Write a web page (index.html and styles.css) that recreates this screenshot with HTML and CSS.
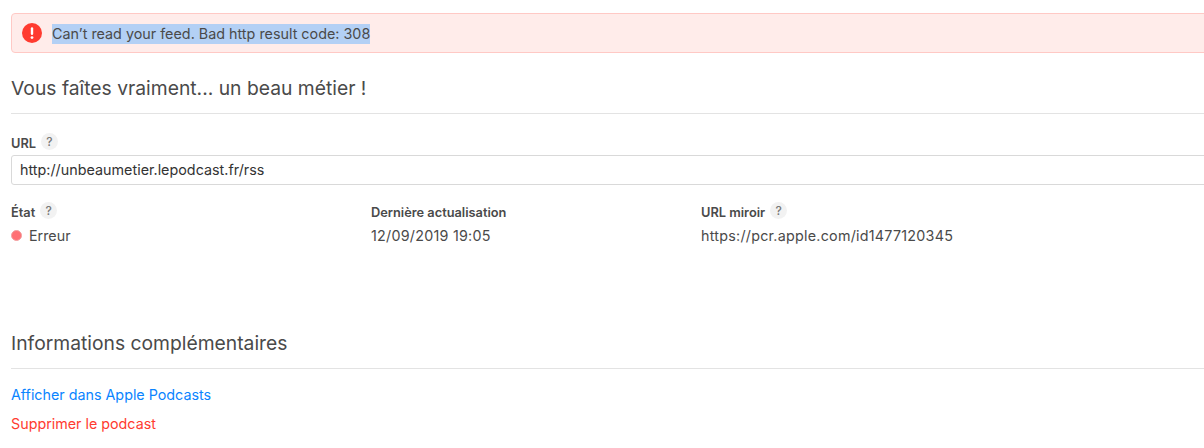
FILE: index.html
```html
<!DOCTYPE html>
<html lang="fr">
<head>
  <meta charset="UTF-8">
  <title>Podcast</title>
  <link rel="stylesheet" href="styles.css">
</head>
<body>
  <div class="page">
    <div class="alert">
      <svg class="alert-icon" width="20" height="20" viewBox="0 0 20 20">
        <circle cx="10" cy="10" r="10" fill="#ff3b30"/>
        <rect x="8.8" y="4.2" width="2.4" height="7.8" rx="1.2" fill="#fff"/>
        <circle cx="10" cy="14.6" r="1.4" fill="#fff"/>
      </svg>
      <span class="alert-text">Can’t read your feed. Bad http result code: 308</span>
    </div>

    <h2 class="title">Vous faîtes vraiment... un beau métier !</h2>

    <div class="field">
      <div class="label">URL <span class="help">?</span></div>
      <input class="input" type="text" value="http://unbeaumetier.lepodcast.fr/rss">
    </div>

    <div class="columns">
      <div class="col">
        <div class="label">État <span class="help">?</span></div>
        <div class="value"><span class="dot"></span>Erreur</div>
      </div>
      <div class="col">
        <div class="label">Dernière actualisation</div>
        <div class="value value-num">12/09/2019 19:05</div>
      </div>
      <div class="col">
        <div class="label">URL miroir <span class="help">?</span></div>
        <div class="value value-num">https://pcr.apple.com/id1477120345</div>
      </div>
    </div>

    <h2 class="title title-info">Informations complémentaires</h2>

    <div class="links">
      <a class="link" href="#">Afficher dans Apple Podcasts</a>
      <a class="link link-danger" href="#">Supprimer le podcast</a>
    </div>
  </div>
</body>
</html>
```

FILE: styles.css
```css
* { box-sizing: border-box; }
html, body {
  overflow: hidden;
}
body {
  margin: 0;
  background: #fff;
  font-family: Inter, 'Noto Sans', sans-serif;
  font-size: 14px;
  color: #4a4a4a;
}
.page {
  width: 1240px;
  padding: 13px 0 0 11px;
}
.alert {
  display: flex;
  align-items: center;
  height: 40px;
  padding-left: 10px;
  background: #ffecea;
  border: 1px solid #ffc9c5;
  border-radius: 4px;
}
.alert-icon {
  margin-right: 10px;
  flex-shrink: 0;
}
.alert-text {
  margin-top: 2px;
  background: #b3d0f5;
  font-size: 14.35px;
  line-height: 20px;
}
.title {
  margin: 0;
  height: 61px;
  padding-top: 22px;
  border-bottom: 1px solid #e3e3e3;
  font-size: 19.3px;
  line-height: 26px;
  font-weight: 400;
  color: #4a4a4a;
}
.field {
  margin-top: 20px;
}
.label {
  display: flex;
  align-items: center;
  gap: 5px;
  height: 18px;
  font-size: 12.8px;
  font-weight: 600;
  color: #4a4a4a;
}
.help {
  display: inline-flex;
  align-items: center;
  justify-content: center;
  width: 17px;
  height: 17px;
  margin-top: -3px;
  border-radius: 50%;
  background: #f2f2f2;
  font-size: 12px;
  font-weight: 500;
  color: #777;
}
.input {
  display: block;
  width: 100%;
  height: 30px;
  margin-top: 3px;
  padding: 0 8px 1px;
  border: 1px solid #d9d9d9;
  border-radius: 3px;
  font-family: inherit;
  font-size: 14.35px;
  color: #333;
}
.columns {
  display: grid;
  grid-template-columns: 360px 330px 1fr;
  margin-top: 18px;
}
.value {
  display: flex;
  align-items: center;
  height: 20px;
  margin-top: 4px;
  font-size: 14.3px;
}
.value-num {
  letter-spacing: 0.25px;
}
.dot {
  width: 11px;
  height: 11px;
  margin-right: 7px;
  border-radius: 50%;
  background: #ff7074;
  border: 1px solid #f2a0a0;
}
.title-info {
  margin-top: 63px;
}
.links {
  display: flex;
  flex-direction: column;
  align-items: flex-start;
  gap: 11px;
  margin-top: 17px;
}
.link {
  font-size: 14.3px;
  line-height: 18px;
  color: #0a84ff;
  text-decoration: none;
}
.link-danger {
  color: #ff3b30;
}
```
